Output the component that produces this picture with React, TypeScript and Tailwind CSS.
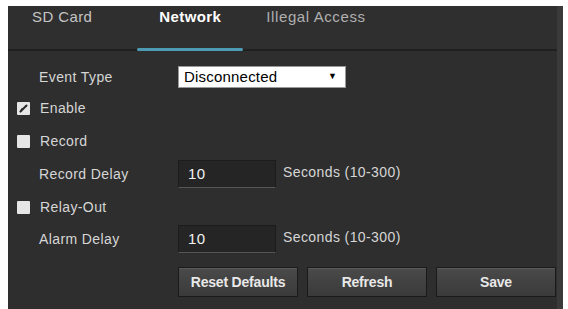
import React from "react";

function Check({ checked }: { checked?: boolean }) {
  return (
    <div className="w-[13px] h-[13px] bg-[#e6e6e6] rounded-[1px] flex items-center justify-center">
      {checked && (
        <svg width="9" height="9" viewBox="0 0 9 9">
          <path d="M1.5 7.5 L7.5 1.5" stroke="#2a2a2a" strokeWidth="2" strokeLinecap="round" />
          <path d="M1.5 7.5 L3 4.8" stroke="#2a2a2a" strokeWidth="1.5" strokeLinecap="round" />
        </svg>
      )}
    </div>
  );
}

function NumInput() {
  return (
    <div className="w-[98px] h-[28px] bg-[#252525] border border-[#1c1c1c] border-b-[#555] flex items-center pl-[9px] text-[#f2f2f2] text-[15px]">
      10
    </div>
  );
}

function Btn({ children }: { children: React.ReactNode }) {
  return (
    <div className="w-[120px] h-[30px] bg-gradient-to-b from-[#4a4a4a] to-[#3a3a3a] border border-[#1a1a1a] shadow-[inset_0_1px_0_#5a5a5a] flex items-center justify-center text-[#e8e8e8] text-[14px] font-bold tracking-[-0.2px]">
      {children}
    </div>
  );
}

export default function App() {
  return (
    <div className="w-[568px] h-[309px] bg-white pl-[8px] pr-[5px] pt-[6px] font-['Liberation_Sans',Arial,sans-serif]">
      <div className="h-[303px] bg-[#2e2e2e] border-r-[6px] border-[#3a3a3a] flex flex-col">
        <div className="h-[45px] bg-[#2f2f2f] border-b-2 border-[#202020] flex items-start text-[15px] shrink-0">
          <div className="ml-[24px] text-[#c4c4c4] tracking-[0.4px]">SD Card</div>
          <div className="ml-[45px] h-[43px] flex flex-col items-center w-[106px] relative">
            <div className="text-white font-bold tracking-[0.4px]">Network</div>
            <div className="absolute bottom-[-2px] left-0 w-[106px] h-[3px] bg-[#4d9ab3] rounded-full" />
          </div>
          <div className="ml-[23px] text-[#b0b0b0] tracking-[0.6px]">Illegal Access</div>
        </div>
        <div className="flex flex-col text-[14px] text-[#d6d6d6] tracking-[0.4px]">
          <div className="flex items-center h-[22px] mt-[15px]">
            <div className="pl-[31px] w-[170px]">Event Type</div>
            <div className="w-[168px] h-[22px] bg-white border border-[#999] flex items-center justify-between pl-[5px] pr-[8px] text-black text-[15px] tracking-[0.2px]">
              <span>Disconnected</span>
              <span className="text-[9px]">▼</span>
            </div>
          </div>
          <div className="flex items-center h-[20px] mt-[10px] pl-[9px] gap-[10px]">
            <Check checked />
            <span>Enable</span>
          </div>
          <div className="flex items-center h-[20px] mt-[13px] pl-[9px] gap-[10px]">
            <Check />
            <span>Record</span>
          </div>
          <div className="flex items-center h-[28px] mt-[9px]">
            <div className="pl-[31px] w-[170px]">Record Delay</div>
            <NumInput />
            <div className="ml-[7px] mb-[4px]">Seconds (10-300)</div>
          </div>
          <div className="flex items-center h-[20px] mt-[9px] pl-[9px] gap-[10px]">
            <Check />
            <span>Relay-Out</span>
          </div>
          <div className="flex items-center h-[28px] mt-[8px]">
            <div className="pl-[31px] w-[170px]">Alarm Delay</div>
            <NumInput />
            <div className="ml-[7px] mb-[4px]">Seconds (10-300)</div>
          </div>
          <div className="flex items-center mt-[14px] pl-[170px] gap-[9px]">
            <Btn>Reset Defaults</Btn>
            <Btn>Refresh</Btn>
            <Btn>Save</Btn>
          </div>
        </div>
      </div>
    </div>
  );
}
